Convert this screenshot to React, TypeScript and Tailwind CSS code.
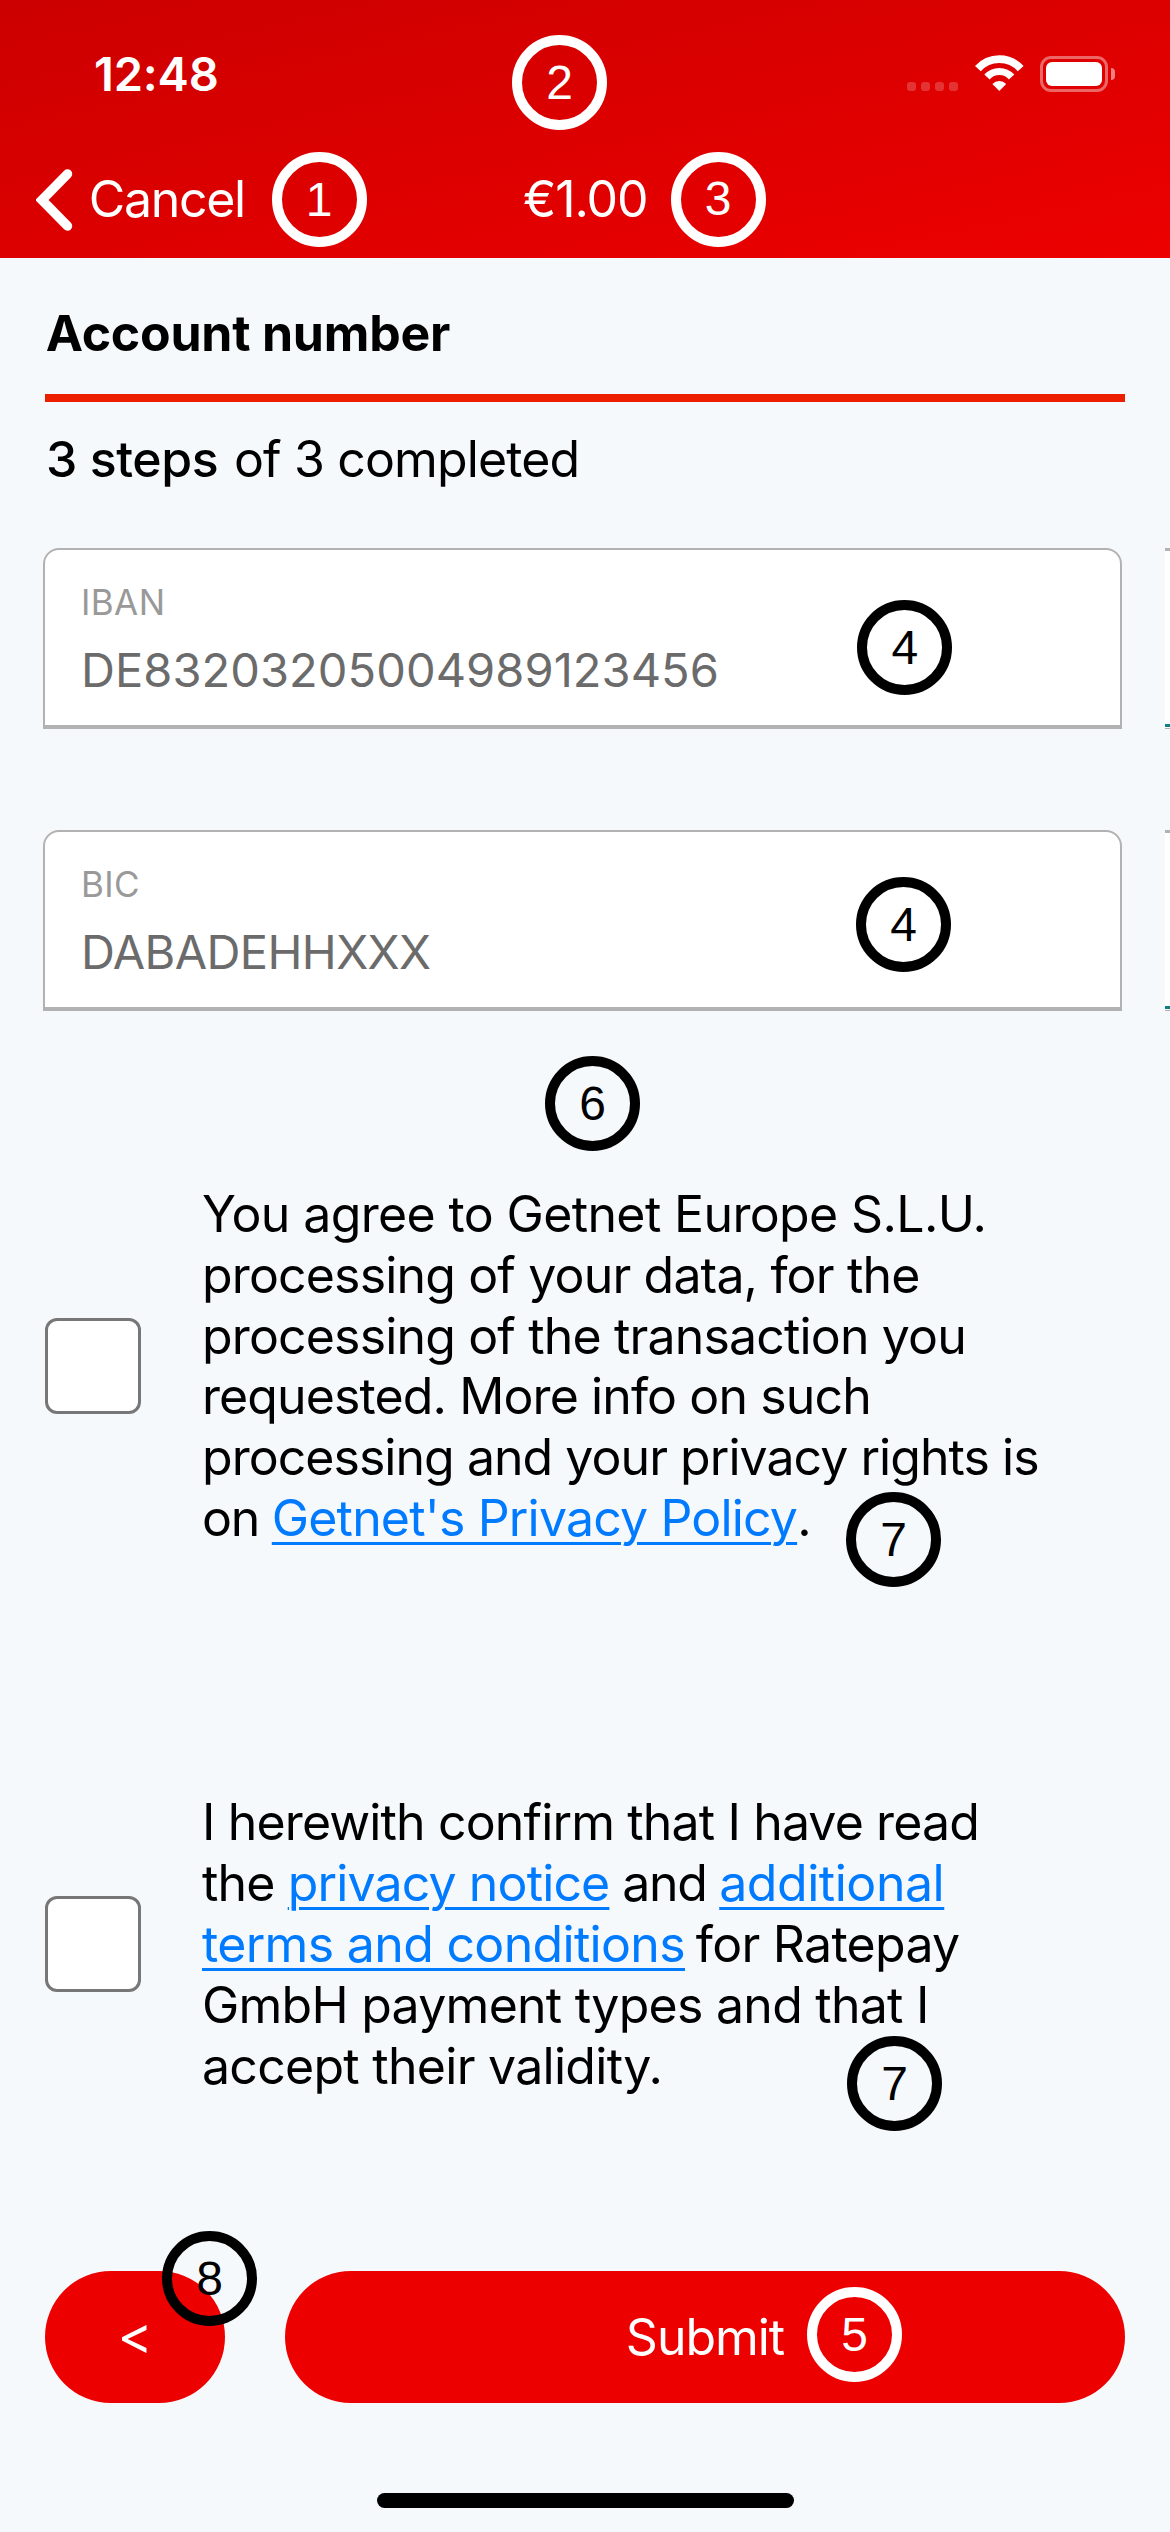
import type { ReactNode } from "react";

type BadgeProps = { n: number; place: string; light?: boolean };

function Badge({ n, place, light }: BadgeProps) {
  return (
    <div
      className={`absolute z-10 flex size-[95px] items-center justify-center rounded-full border-[10.5px] font-['Liberation_Sans',sans-serif] text-[48px] leading-none ${
        light ? "border-white text-white" : "border-black text-black"
      } ${place}`}
    >
      {n}
    </div>
  );
}

function StatusIcons() {
  return (
    <div className="flex items-start">
      <div className="mt-9 flex gap-[5px]">
        {[0, 1, 2, 3].map((i) => (
          <span key={i} className="size-[9px] rounded-[3px] bg-white/20" />
        ))}
      </div>
      <svg className="mt-[9px] ml-[17px]" width="49" height="37" viewBox="0 0 49 37" fill="none">
        <path d="M2.9 13.7A28.8 28.8 0 0 1 45.7 13.7" stroke="white" strokeWidth="7.8" />
        <path d="M12 22A16.5 16.5 0 0 1 36.6 22" stroke="white" strokeWidth="7.2" />
        <path d="M24.3 36L17.4 29A9.6 9.6 0 0 1 31.2 29Z" fill="white" />
      </svg>
      <div className="mt-[10px] ml-[16px] h-9 w-[68px] rounded-[11px] border-[3px] border-white/40 p-[3px]">
        <div className="size-full rounded-[6px] bg-white" />
      </div>
      <div className="mt-[22px] ml-[3px] h-[12px] w-[4px] rounded-r-full bg-white/50" />
    </div>
  );
}

type FieldProps = { label: string; labelClass: string; value: string; valueClass: string };

function Field({ label, labelClass, value, valueClass }: FieldProps) {
  return (
    <div className="flex h-[181px] gap-[43px] pl-[43px]">
      <div className="w-[1079px] shrink-0 rounded-t-[16px] border-2 border-b-4 border-[#b2b2b2] bg-white pt-[31px] pl-[36px]">
        <div className={`text-[35px] leading-[42px] text-[#999999] ${labelClass}`}>{label}</div>
        <div className={`mt-[19px] text-[47px] leading-[56px] text-[#6b6b6b] ${valueClass}`}>{value}</div>
      </div>
      <div className="flex grow flex-col border-t-[3px] border-b border-[#b2b2b2] bg-white">
        <div className="mt-auto mb-px h-[3px] bg-[#0f8083]" />
      </div>
    </div>
  );
}

function Link({ children, className = "" }: { children: ReactNode; className?: string }) {
  return (
    <a
      href="#"
      className={`text-[#007aff] underline decoration-[3px] underline-offset-[6px] ${className}`}
    >
      {children}
    </a>
  );
}

function Checkbox() {
  return <div className="size-24 shrink-0 rounded-[12px] border-[3px] border-[#777777] bg-white" />;
}

export default function App() {
  return (
    <div className="relative flex h-[2532px] w-[1170px] flex-col overflow-hidden bg-[#f5f9fc] font-['Inter',sans-serif] text-[50px] leading-[61px] whitespace-pre text-black">
      <header className="h-[258px] shrink-0 bg-linear-to-br from-[#cc0000] to-[#ed0000] pt-[46px] text-white">
        <div className="flex h-[123px] justify-between pr-[55px] pl-[94px]">
          <div className="text-[47px] leading-[56px] font-semibold tracking-[-0.2px]">12:48</div>
          <StatusIcons />
        </div>
        <div className="flex items-start pl-[36px]">
          <svg width="38" height="62" viewBox="0 0 38 62" fill="none">
            <path d="M31.5 5L6 31L31.5 57" stroke="white" strokeWidth="9.5" strokeLinecap="round" />
          </svg>
          <div className="ml-[14.7px] w-[434.3px] tracking-[-1.3px]">Cancel</div>
          <div className="tracking-[-1.1px]">€1.00</div>
        </div>
      </header>

      <h1 className="mt-[45px] ml-[45.7px] font-bold tracking-[-0.23px]">Account number</h1>
      <div className="mx-[45px] mt-[30px] h-2 shrink-0 bg-[#ec2000]" />
      <div className="mt-[27px] ml-[46px] flex">
        <span className="w-[188px] font-medium tracking-[-0.45px]">3 steps</span>
        <span className="tracking-[-0.86px]">of 3 completed</span>
      </div>

      <div className="mt-[58px] flex flex-col gap-[101px]">
        <Field label="IBAN" labelClass="tracking-[0.4px]" value="DE83203205004989123456" valueClass="tracking-[0.07px]" />
        <Field label="BIC" labelClass="tracking-[0.3px]" value="DABADEHHXXX" valueClass="tracking-[-0.6px]" />
      </div>

      <div className="mt-[173px] flex items-center gap-[61px] pl-[45px] leading-[60.8px]">
        <Checkbox />
        <div>
          <div className="tracking-[-0.63px]">You agree to Getnet Europe S.L.U.</div>
          <div className="tracking-[-0.84px]">processing of your data, for the</div>
          <div className="tracking-[-0.84px]">processing of the transaction you</div>
          <div className="tracking-[-0.89px]">requested. More info on such</div>
          <div className="tracking-[-0.96px]">processing and your privacy rights is</div>
          <div className="tracking-[-1.27px]">
            {"on "}
            <Link className="tracking-[-0.82px]">Getnet's Privacy Policy</Link>.
          </div>
        </div>
      </div>

      <div className="mt-[243px] flex items-center gap-[61px] pl-[45px]">
        <Checkbox />
        <div className="tracking-[-0.86px]">
          <div>I herewith confirm that I have read</div>
          <div>
            {"the "}
            <Link>privacy notice</Link>
            <span className="tracking-[-1.3px]">{" and "}</span>
            <Link className="tracking-[-0.46px]">additional</Link>
          </div>
          <div>
            <Link className="tracking-[-0.67px]">terms and conditions</Link>
            <span className="tracking-[-3.2px]"> </span>
            <span className="tracking-[-0.72px]">for Ratepay</span>
          </div>
          <div className="tracking-[-0.74px]">GmbH payment types and that I</div>
          <div className="tracking-[-0.72px]">accept their validity.</div>
        </div>
      </div>

      <div className="mt-[174px] flex h-[132px] shrink-0 gap-[60px] px-[45px] text-white">
        <button className="w-[180px] rounded-full bg-[#ec0000] pb-[2px] text-[53px]">{"<"}</button>
        <button className="grow rounded-full bg-[#ec0000] pt-[2px] tracking-[-1.04px]">Submit</button>
      </div>

      <div className="mt-[90px] h-[15px] w-[417px] shrink-0 self-center rounded-full bg-black" />

      <Badge n={2} light place="left-[512px] top-[35px]" />
      <Badge n={1} light place="left-[271.5px] top-[152px]" />
      <Badge n={3} light place="left-[670.5px] top-[151.5px]" />
      <Badge n={4} place="left-[857.3px] top-[600.3px]" />
      <Badge n={4} place="left-[856px] top-[877.3px]" />
      <Badge n={6} place="left-[545px] top-[1056px]" />
      <Badge n={7} place="left-[846px] top-[1492px]" />
      <Badge n={7} place="left-[847px] top-[2036px]" />
      <Badge n={5} light place="left-[807px] top-[2287px]" />
      <Badge n={8} place="left-[162px] top-[2231px]" />
    </div>
  );
}
